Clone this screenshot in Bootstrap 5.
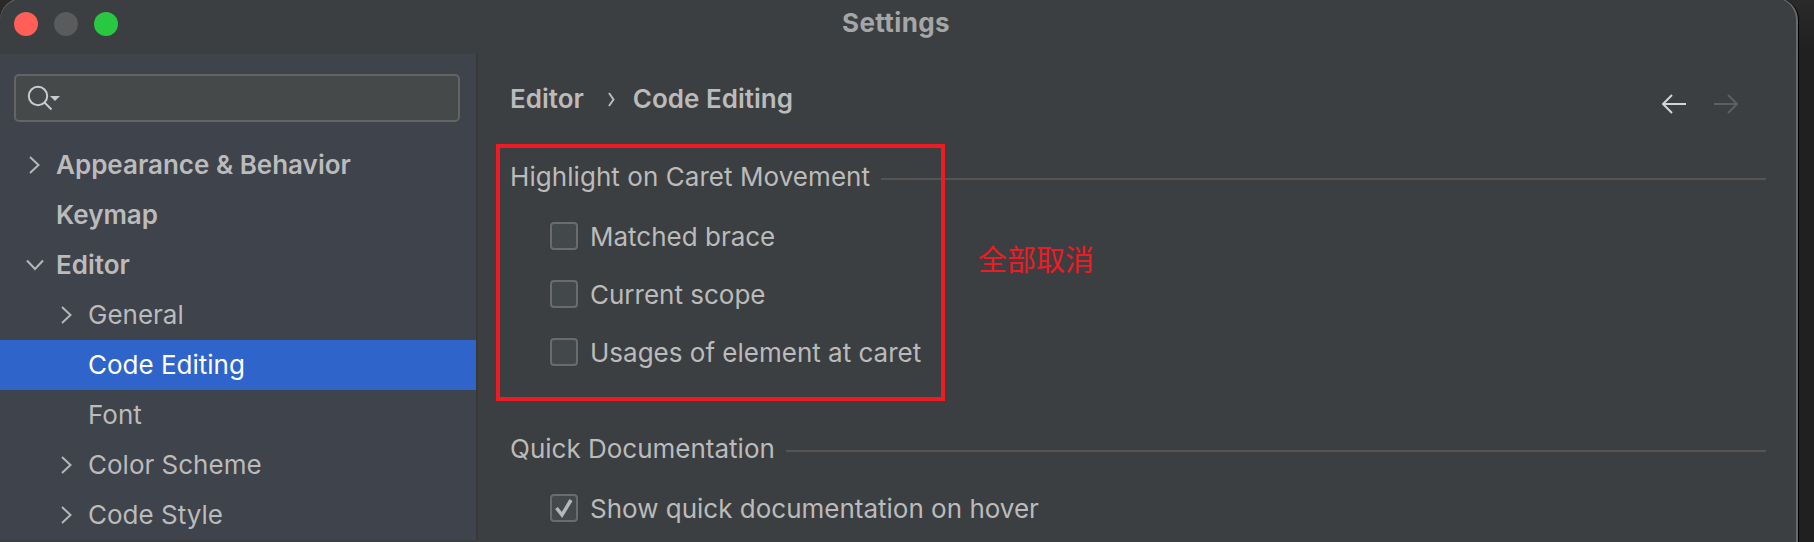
<!DOCTYPE html>
<html lang="en">
<head>
<meta charset="utf-8">
<title>Settings</title>
<link href="https://cdn.jsdelivr.net/npm/bootstrap@5.3.0/dist/css/bootstrap.min.css" rel="stylesheet">
<style>
body{background:linear-gradient(#2a2a2a,#202020 50px);font-family:Inter,"Noto Sans CJK SC",sans-serif;font-size:26px;line-height:50px;color:#bbb;height:542px}
.window{width:1799px;height:560px;margin-top:-2px;background:#3c3f41;border-right:1px solid #000;border-radius:22px 22px 0 0;box-shadow:inset -2px 0 0 #666869,inset 0 1px 0 #66686a}
.titlebar{height:56px;padding:2px 0 0 14px}
.titlebar .caption{color:#a5a6a8;font-weight:700;font-size:26px;line-height:46px;height:54px;letter-spacing:.4px;padding-right:124px}
.light{width:24px;height:24px;border-radius:50%}
.light.close-dot{background:#ff5f57}
.light.min-dot{background:#5a5b5c}
.light.zoom-dot{background:#28c840}
.lights{gap:16px;padding-top:12px}
.sidebar{width:478px;height:486px;background:#3f434c;border-right:2px solid #393838}
.searchbox{margin:20px 16px 18px 14px;height:48px;border:2px solid #646464;border-radius:5px;background:#45494a}
.tree-row{height:50px;padding-left:25px}
.tree-row.sub{padding-left:57px}
.tree-row svg{width:31px;flex:none}
.tree-row.selected{background:#2f65ca;color:#fff}
.tree-row.top{font-weight:600}
.main{padding:20px 32px 0 32px}
.crumbs{height:50px;font-weight:600}
.crumb-sep{margin:0 17px 0 24px}
.arrows{margin-right:26px;margin-top:10px}
.group-title{height:50px;gap:11px}
.group-title.wide{letter-spacing:.06px}
.rule{height:2px;background:#555453;margin-top:4px}
.opts{padding-top:5px}
.opt{height:58px;padding-left:40px;gap:12px}
.opt-text{padding-top:2px}
.box{width:28px;height:28px;border:2px solid #6b6b6b;border-radius:4px;background:#43494a;flex:none}
.second{margin-top:43px}
.frame{left:496px;top:144px;width:449px;height:257px;border:4px solid #ed1c24}
.note{left:978px;top:233px;font-family:"Noto Sans CJK SC",sans-serif;font-size:29px;line-height:50px;color:#ed1c24}
</style>
<script src="https://cdn.jsdelivr.net/npm/bootstrap@5.3.0/dist/js/bootstrap.bundle.min.js"></script>
</head>
<body class="overflow-hidden position-relative">
<div class="window overflow-hidden">
  <header class="titlebar d-flex">
    <div class="d-flex lights">
      <span class="light close-dot"></span>
      <span class="light min-dot"></span>
      <span class="light zoom-dot"></span>
    </div>
    <div class="caption flex-grow-1 text-center">Settings</div>
  </header>
  <div class="d-flex">
    <nav class="sidebar flex-shrink-0">
      <div class="searchbox d-flex align-items-center">
        <svg class="ms-2" width="40" height="30" viewBox="0 0 40 30" fill="none" stroke="#c8cbd0" stroke-width="2"><circle cx="14" cy="13" r="9.2"/><path d="M20.5 19.5L27.500 26.500"/><path d="M26 13h10l-5 5z" fill="#c8cbd0" stroke="none"/></svg>
      </div>
      <div class="tree-row top d-flex align-items-center"><svg height="20" viewBox="0 0 31 20" fill="none" stroke="#b4b6b9" stroke-width="2"><path d="M5 2l8.500 8L5 18"/></svg><span>Appearance &amp; Behavior</span></div>
      <div class="tree-row top d-flex align-items-center"><svg height="20"></svg><span>Keymap</span></div>
      <div class="tree-row top d-flex align-items-center"><svg height="20" viewBox="0 0 31 20" fill="none" stroke="#b4b6b9" stroke-width="2"><path d="M2 5.500l8 8.500 8-8.500"/></svg><span>Editor</span></div>
      <div class="tree-row sub d-flex align-items-center"><svg height="20" viewBox="0 0 31 20" fill="none" stroke="#b4b6b9" stroke-width="2"><path d="M5 2l8.500 8L5 18"/></svg><span>General</span></div>
      <div class="tree-row sub selected d-flex align-items-center"><svg height="20"></svg><span>Code Editing</span></div>
      <div class="tree-row sub d-flex align-items-center"><svg height="20"></svg><span>Font</span></div>
      <div class="tree-row sub d-flex align-items-center"><svg height="20" viewBox="0 0 31 20" fill="none" stroke="#b4b6b9" stroke-width="2"><path d="M5 2l8.500 8L5 18"/></svg><span>Color Scheme</span></div>
      <div class="tree-row sub d-flex align-items-center"><svg height="20" viewBox="0 0 31 20" fill="none" stroke="#b4b6b9" stroke-width="2"><path d="M5 2l8.500 8L5 18"/></svg><span>Code Style</span></div>
    </nav>
    <main class="main flex-grow-1">
      <div class="crumbs d-flex align-items-center">
        <span>Editor</span>
        <svg class="crumb-sep" width="8" height="18" viewBox="0 0 8 18" fill="none" stroke="#bbb" stroke-width="2"><path d="M1 3l4.500 6.500L1 16"/></svg>
        <span>Code Editing</span>
        <svg class="arrows ms-auto" width="80" height="22" viewBox="0 0 80 22" fill="none" stroke-width="2"><path stroke="#d2d4d6" d="M26 11H3M12 2l-9 9 9 9"/><path stroke="#5e5f60" d="M54 11h23M68 2l9 9-9 9"/></svg>
      </div>
      <section class="mt-4 pt-1">
        <div class="group-title wide d-flex align-items-center"><span>Highlight on Caret Movement</span><div class="rule flex-grow-1"></div></div>
        <div class="opts">
        <label class="opt d-flex align-items-center"><span class="box"></span><span class="opt-text">Matched brace</span></label>
        <label class="opt d-flex align-items-center"><span class="box"></span><span class="opt-text">Current scope</span></label>
        <label class="opt d-flex align-items-center"><span class="box"></span><span class="opt-text">Usages of element at caret</span></label>
        </div>
      </section>
      <section class="second">
        <div class="group-title d-flex align-items-center"><span>Quick Documentation</span><div class="rule flex-grow-1"></div></div>
        <div class="opts">
        <label class="opt d-flex align-items-center"><span class="box d-flex"><svg width="24" height="24" viewBox="0 0 24 24" fill="none" stroke="#b4b6b7" stroke-width="3.500"><path d="M4.500 12l5.500 7L19 4"/></svg></span><span class="opt-text">Show quick documentation on hover</span></label>
        </div>
      </section>
    </main>
  </div>
</div>
<div class="frame position-absolute"></div>
<div class="note position-absolute text-nowrap">全部取消</div>
</body>
</html>
